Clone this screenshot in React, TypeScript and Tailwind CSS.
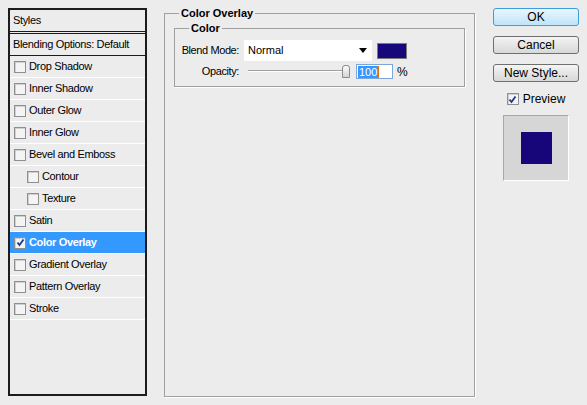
import React from "react";

const styles = [
  { name: "Drop Shadow" },
  { name: "Inner Shadow" },
  { name: "Outer Glow" },
  { name: "Inner Glow" },
  { name: "Bevel and Emboss" },
  { name: "Contour", indent: true },
  { name: "Texture", indent: true },
  { name: "Satin" },
  { name: "Color Overlay", active: true },
  { name: "Gradient Overlay" },
  { name: "Pattern Overlay" },
  { name: "Stroke" },
];

function Check({ checked }: { checked?: boolean }) {
  return (
    <span className="w-[12px] h-[12px] shrink-0 border border-[#8f8f8f] bg-[#f4f4f4] shadow-[inset_1px_1px_0_#d0d0d0] flex items-center justify-center">
      {checked && (
        <svg width="9" height="9" viewBox="0 0 9 9">
          <path d="M1.5 4.5 L3.5 7 L7.5 1.5" fill="none" stroke="#1d3a8a" strokeWidth="1.8" />
        </svg>
      )}
    </span>
  );
}

function Button({ label, primary }: { label: string; primary?: boolean }) {
  return (
    <button
      className={`w-[86px] h-[18px] rounded-[3px] border text-[12px] leading-none text-black ${
        primary
          ? "border-[#3c9fdc] bg-gradient-to-b from-[#eaf6fd] to-[#bfe4f8]"
          : "border-[#707070] bg-gradient-to-b from-[#f4f4f4] to-[#d8d8d8]"
      }`}
    >
      {label}
    </button>
  );
}

export default function App() {
  return (
    <div
      className="w-[587px] h-[405px] bg-[#ececec] flex items-start pt-[8px] pl-[8px] text-[11px] text-black"
      style={{ fontFamily: '"Liberation Sans", Arial, sans-serif' }}
    >
      {/* Styles list */}
      <div className="w-[139px] h-[388px] border-2 border-[#1c1c1c] flex flex-col tracking-[-0.35px]">
        <div className="h-[24px] flex items-center pl-[3px] border-b-[3px] border-double border-[#1c1c1c]">
          Styles
        </div>
        <div className="h-[22px] flex items-center pl-[3px] border-b border-[#1c1c1c]">
          Blending Options: Default
        </div>
        {styles.map((s) => (
          <div
            key={s.name}
            className={`h-[22px] flex items-center gap-[3px] border-b border-white ${
              s.indent ? "pl-[17px]" : "pl-[4px]"
            } ${s.active ? "bg-[#3399ff] text-white font-bold" : ""}`}
          >
            <Check checked={s.active} />
            <span>{s.name}</span>
          </div>
        ))}
      </div>

      {/* Color Overlay group */}
      <fieldset className="ml-[17px] w-[311px] h-[389px] border border-[#a0a0a0] shadow-[1px_1px_0_#fff] pl-[9px] pr-[9px]">
        <legend className="ml-[5px] px-[2px] font-bold leading-[11px]">Color Overlay</legend>
        <fieldset className="mt-[3px] w-[291px] border border-[#a0a0a0] shadow-[1px_1px_0_#fff] pb-[7px]">
          <legend className="ml-[14px] px-[2px] font-bold leading-[12px]">Color</legend>
          <div className="mt-[6px] flex items-center">
            <span className="w-[64px] text-right tracking-[-0.4px]">Blend Mode:</span>
            <div className="ml-[5px] w-[128px] h-[21px] bg-white flex items-center justify-between pl-[4px] pr-[5px]">
              <span>Normal</span>
              <svg width="8" height="5" viewBox="0 0 8 5">
                <path d="M0 0 H8 L4 5 Z" fill="#000" />
              </svg>
            </div>
            <span className="ml-[5px] w-[30px] h-[16px] bg-[#16077a] border border-[#7a7a7a]" />
          </div>
          <div className="mt-[3px] flex items-center h-[15px]">
            <span className="w-[64px] text-right tracking-[-0.4px]">Opacity:</span>
            <div className="ml-[9px] relative w-[102px] h-[15px]">
              <div className="absolute left-0 right-[4px] top-[6px] h-[2px] border-t border-[#a0a0a0] border-b border-b-white" />
              <div className="absolute left-[94px] top-[1px] w-[8px] h-[13px] rounded-t-[3px] border border-[#8a8a8a] bg-gradient-to-b from-[#fafafa] to-[#d4d4d4]" />
            </div>
            <div className="ml-[6px] w-[37px] h-[15px] bg-white border border-[#7ea6d8] flex items-center pl-[1px]">
              <span className="bg-[#3399ff] text-white leading-[12px] px-[1px]">100</span>
              <span className="w-[1px] h-[12px] bg-[#e07010]" />
            </div>
            <span className="ml-[4px] text-[12px]">%</span>
          </div>
        </fieldset>
      </fieldset>

      {/* Buttons */}
      <div className="ml-[18px] flex flex-col items-center gap-[10px]">
        <Button label="OK" primary />
        <Button label="Cancel" />
        <Button label="New Style..." />
        <div className="flex flex-col items-center -mt-[2px]">
          <label className="flex items-center gap-[4px] text-[12px]">
            <Check checked />
            <span>Preview</span>
          </label>
          <div className="mt-[7px] w-[66px] h-[66px] bg-[#d6d6d6] border border-[#a8a8a8] border-r-white border-b-white flex items-center justify-center">
            <span className="w-[31px] h-[32px] bg-[#16067a]" />
          </div>
        </div>
      </div>
    </div>
  );
}
